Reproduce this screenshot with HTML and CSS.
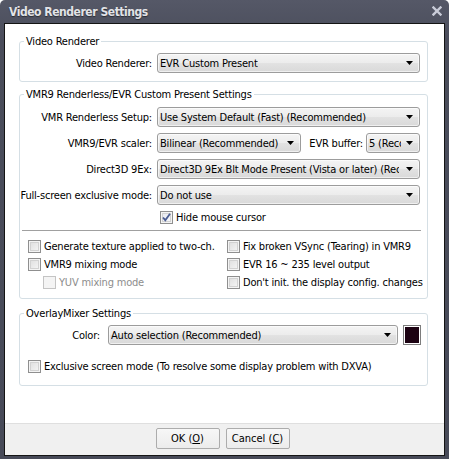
FILE: index.html
```html
<!DOCTYPE html>
<html>
<head>
<meta charset="utf-8">
<link rel="stylesheet" href="styles.css">
</head>
<body>
<div class="window">
  <div class="titlebar">
    <span class="title">Video Renderer Settings</span>
    <svg class="close" width="10" height="10" viewBox="0 0 10 10"><path d="M1.5 1.5 L8.5 8.5 M8.5 1.5 L1.5 8.5" stroke="#c9ccd8" stroke-width="2.4" stroke-linecap="square"/></svg>
  </div>
  <div class="client">
    <div class="content">
      <fieldset class="group g1">
        <legend>Video Renderer</legend>
        <div class="form">
          <label class="lbl">Video Renderer:</label>
          <div class="select"><span class="val">EVR Custom Present</span></div>
        </div>
      </fieldset>

      <fieldset class="group g2">
        <legend>VMR9 Renderless/EVR Custom Present Settings</legend>
        <div class="form rows">
          <label class="lbl">VMR Renderless Setup:</label>
          <div class="select"><span class="val">Use System Default (Fast) (Recommended)</span></div>

          <label class="lbl">VMR9/EVR scaler:</label>
          <div class="pair">
            <div class="select scaler"><span class="val">Bilinear (Recommended)</span></div>
            <label class="lbl buf-lbl">EVR buffer:</label>
            <div class="select buffer"><span class="val">5 (Recommended)</span></div>
          </div>

          <label class="lbl">Direct3D 9Ex:</label>
          <div class="select"><span class="val">Direct3D 9Ex Blt Mode Present (Vista or later) (Recommended)</span></div>

          <label class="lbl">Full-screen exclusive mode:</label>
          <div class="select"><span class="val">Do not use</span></div>

          <span></span>
          <div class="check hide-cursor"><span class="box checked"><svg width="11" height="11" viewBox="0 0 11 11"><path d="M2 5.5 L4.3 8.2 L9 1.8" fill="none" stroke="#4a5c92" stroke-width="1.8"/></svg></span><span>Hide mouse cursor</span></div>
        </div>
        <div class="sep"></div>
        <div class="checks">
          <div class="check"><span class="box"></span><span>Generate texture applied to two-ch.</span></div>
          <div class="check"><span class="box"></span><span>Fix broken VSync (Tearing) in VMR9</span></div>
          <div class="check"><span class="box"></span><span>VMR9 mixing mode</span></div>
          <div class="check"><span class="box"></span><span>EVR 16 ~ 235 level output</span></div>
          <div class="check disabled indent"><span class="box"></span><span>YUV mixing mode</span></div>
          <div class="check"><span class="box"></span><span>Don't init. the display config. changes</span></div>
        </div>
      </fieldset>

      <fieldset class="group g3">
        <legend>OverlayMixer Settings</legend>
        <div class="color-row">
          <label class="lbl color-lbl">Color:</label>
          <div class="select color-sel"><span class="val">Auto selection (Recommended)</span></div>
          <span class="swatch"></span>
        </div>
        <div class="check excl"><span class="box"></span><span>Exclusive screen mode (To resolve some display problem with DXVA)</span></div>
      </fieldset>
    </div>
    <div class="footer">
      <button class="btn">OK (<u>O</u>)</button>
      <button class="btn">Cancel (<u>C</u>)</button>
    </div>
  </div>
</div>
</body>
</html>
```
FILE: styles.css
```css
* { box-sizing: border-box; }
html, body { margin: 0; padding: 0; }
body {
  width: 449px; height: 459px; overflow: hidden;
  font-family: "DejaVu Sans Condensed", "DejaVu Sans", sans-serif;
  font-size: 11px; letter-spacing: -0.2px; color: #000; background: #fff;
}
.window {
  width: 449px; height: 459px;
  background: linear-gradient(#555867, #4a4d5b 40px, #474a58);
  padding: 0 4px 3px 4px;
  display: flex; flex-direction: column;
  border-radius: 5px 5px 0 0;
}
.titlebar {
  height: 23px; flex: none;
  display: flex; align-items: center; justify-content: space-between;
  padding: 0 3px 0 5px;
}
.title {
  font-weight: bold; font-size: 12px; letter-spacing: -0.45px; color: #e2e3e7;
  text-shadow: 0 1px 1px #2a2c34;
}
.close { display: block; margin-top: -1px; }
.client {
  flex: 1; border: 1px solid #141414; background: #fff;
  display: flex; flex-direction: column; min-height: 0;
}
.content { flex: 1; padding: 11px 16px 0 14px; min-width: 0; }

.group {
  margin: 0; min-width: 0;
  border: 1px solid #d5dfe5; border-radius: 3px;
  padding: 0;
}
.group legend {
  padding: 0 2px; margin-left: 4px;
  line-height: 13px; color: #000;
}
.g1 { padding: 5px 7px 8px 0; }
.g2 { margin-top: 6px; padding: 6px 3px 9px 0; }
.g3 { margin-top: 8px; padding: 5px 6px 12px 0; }

.form {
  display: grid; grid-template-columns: 132px minmax(0, 1fr);
  column-gap: 5px; row-gap: 6px; align-items: center;
}
.g2 .form { padding-right: 4px; }
.lbl { text-align: right; white-space: nowrap; line-height: 13px; }

.select {
  position: relative; min-width: 0;
  height: 20px;
  border: 1px solid #9c9c9c; border-radius: 3px;
  background: linear-gradient(#f4f4f4, #ececec 50%, #e2e2e2 51%, #d9d9d9);
  display: flex; align-items: center;
  padding: 0 20px 0 2px;
  box-shadow: inset 0 0 0 1px rgba(255,255,255,0.6);
}
.select::after {
  content: ""; position: absolute; right: 6px; top: 7px;
  width: 7px; height: 4px; background: #000;
  clip-path: polygon(0 0, 100% 0, 50% 100%);
}
.val { white-space: nowrap; overflow: hidden; line-height: 13px; min-width: 0; }

.pair { display: flex; align-items: center; min-width: 0; }
.scaler { width: 144px; flex: none; }
.buf-lbl { flex: 1; text-align: right; padding-right: 3px; }
.buffer { width: 54px; flex: none; padding-right: 18px; }

.check {
  display: flex; align-items: center; gap: 3px;
  height: 13px; line-height: 13px; white-space: nowrap;
}
.hide-cursor { margin-left: 3px; }
.box {
  width: 13px; height: 13px; flex: none;
  border: 1px solid #8f8f8f;
  background: linear-gradient(135deg, #dcdcdc, #f8f8f8);
  box-shadow: inset 0 0 0 1px #f4f4f4, inset 0 0 0 2px #d2d2d2;
  display: flex; align-items: center; justify-content: center;
}
.box.checked { background: linear-gradient(135deg, #e4e6ee, #fafbfd); }
.box svg { display: block; }
.disabled { color: #8d8d8d; }
.disabled .box { border-color: #c4c4c4; background: #f4f4f4; box-shadow: none; }
.indent { margin-left: 15px; }

.sep {
  margin: 6px 3px 0 2px;
  height: 2px; border-top: 1px solid #a0a0a0; border-bottom: 1px solid #fff;
}
.checks {
  display: grid; grid-template-columns: 199px 1fr;
  row-gap: 5px; padding-left: 8px; margin-top: 8px;
}

.color-row { display: flex; align-items: center; }
.color-lbl { width: 80px; flex: none; }
.color-sel { width: 290px; flex: none; margin-left: 8px; }
.swatch {
  width: 18px; height: 20px; flex: none; margin-left: 5px;
  border: 1px solid #7d7d7d; background: #1c0212;
  box-shadow: inset 0 0 0 1px #fff;
}
.excl { margin: 15px 0 0 8px; }

.footer {
  height: 32px; flex: none;
  background: #f0f0f0; border-top: 1px solid #dfdfdf;
  display: flex; justify-content: center; gap: 6px;
  padding: 4px 4px 0 0;
}
.btn {
  width: 64px; height: 21px;
  font: inherit; color: #000;
  border: 1px solid #acacac; border-radius: 2px;
  background: linear-gradient(#f7f7f7, #ececec);
  padding: 0;
}
.btn u { text-underline-offset: 1px; }
```
